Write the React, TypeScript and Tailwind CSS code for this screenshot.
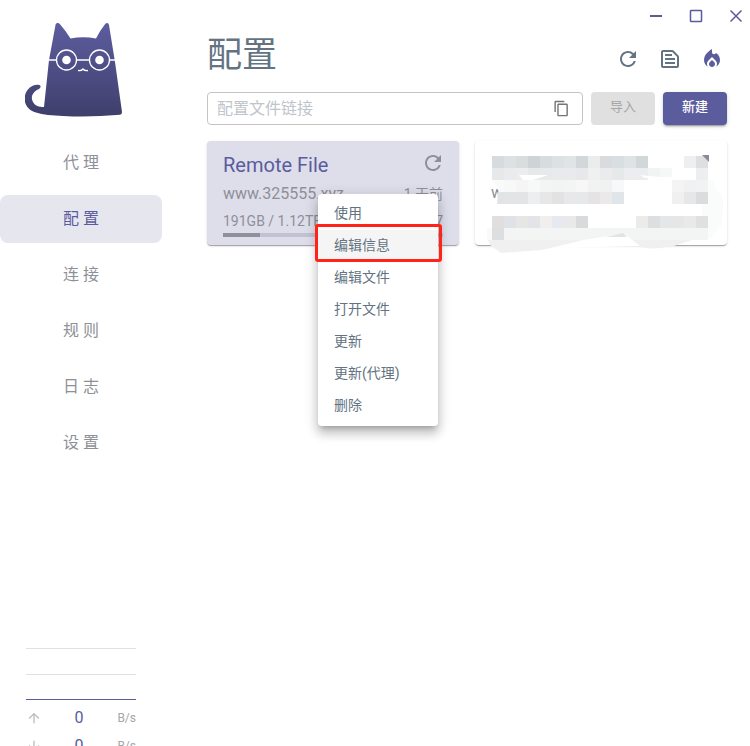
import type { ReactNode } from "react";
import {
  MdArrowDownward,
  MdArrowUpward,
  MdLocalFireDepartment,
  MdOutlineContentCopy,
  MdOutlineTextSnippet,
  MdRefresh,
} from "react-icons/md";

const NAV_ITEMS = ["代 理", "配 置", "连 接", "规 则", "日 志", "设 置"];
const ACTIVE_NAV = "配 置";

const MENU_ITEMS = ["使用", "编辑信息", "编辑文件", "打开文件", "更新", "更新(代理)", "删除"];
const HOVERED_ITEM = "编辑信息";

const CELL = 12;

// one entry per row of blurred cells, "" leaves the cell empty
const MOSAIC: string[][] = [
  ["#d7dbde", "#dde1e4", "#d9dddd", "#ced3d6", "#d7dcdc", "#dce1e3", "#e0e4e5", "#d2d7da", "#ebedec", "#dadbdd", "#d7dfe3", "#dfe3e4", "#d2d7da", "", "", "", "#eeeff1", "#dedfe1"],
  ["#e6e8ea", "#e9ebed", "#ebedee", "#e6e9ea", "#e6eaea", "#e8ebec", "#e8eaeb", "#e6e8ea", "#eff0f0", "#e9ebec", "#e5e9ea", "#ebedee", "#ebedee", "", "", "", "", "#edeef0"],
  ["", "#f8f8f8", "#f5f5f5", "#f7f9f9", "#f3f4f4", "#f2f3f3", "#f3f4f4", "#f7f7f7", "#f2f2f2", "#f0f1f1", "#f6f8fa", "", "", "", "", "#f4f4f4", "#f0f1f3", "#f2f2f3"],
  ["", "#e3e4e6", "#e3e4e6", "#edeef0", "#e8e7e8", "#e3e2e3", "#e8e8ea", "#e7e8ea", "#e6e3e4", "#eaeaeb", "#e0e5e9", "", "", "", "", "#f0f0f1", "#e6e7e9", "#dbdcde"],
  [],
  ["#e0dfde", "#dfe3e7", "#e6e6e5", "#e2e4e8", "#f1efee", "#e6e9f0", "#e9e9ea", "#d9dadb", "", "", "", "", "#edebea", "#dddee0", "#e4e6e8", "#e6e6e6", "#e8e9eb", "#e0e0e0"],
];

function CatLogo() {
  return (
    <svg viewBox="0 0 98 96" className="h-[96px] w-[98px]" aria-label="logo">
      <defs>
        <linearGradient id="fur" x1="0" y1="0" x2="0" y2="1">
          <stop offset="0" stopColor="#5d5da0" />
          <stop offset="1" stopColor="#3f3f6c" />
        </linearGradient>
      </defs>
      <path
        d="M30.500 3C31 .800 33.500.500 35 2.200Q41 9 45.500 16.500Q58 14.200 71 16.500Q75 8.500 80 2.300C81.500.300 83.500.700 84 3L90 40L97 90Q97 92.500 95 92.700Q65 95.500 38 94C27 93.200 18 93 11 90.500C-1 87-3 75 2.500 68C6 63.500 10 62.300 13.500 62.800C17 63.500 15.500 66 13.500 67.200C7 70 5.500 76 8 80C10 84 14 85 19 85L24 38Z"
        fill="url(#fur)"
      />
      <g fill="none" stroke="#fff" strokeWidth="1.300">
        <circle cx="41.500" cy="38" r="10" />
        <circle cx="74.500" cy="38" r="10" />
        <path d="M24 38h7.500M51.500 38h13M84.500 38h6" />
        <path d="M53 48.500q3.500.500 5-1.500q1.500 2 5 1.500" />
      </g>
      <circle cx="41.500" cy="38" r="4.300" fill="#fff" />
      <circle cx="74.500" cy="38" r="4.300" fill="#fff" />
    </svg>
  );
}

function Smudge() {
  return (
    <svg viewBox="0 0 252 112" className="absolute top-0 left-0 h-[112px] w-[252px]" aria-hidden="true">
      <path d="M224 39h15l2 9q8 7 7 15l-1 20l-12 15h-8V63z" fill="#fafbfb" />
      <path d="M12 87h221v12H12z" fill="#f3f4f4" />
      <path d="M12 87h5v12h-5z" fill="#f9fafa" />
      <path d="M13 99h104L66 109L26 112L15 104z" fill="#f0f0f1" />
      <path d="M152 99h65l-18 6q-30 6-45-3z" fill="#f0f0f1" />
      <path d="M76 107L108 99L140 94h11l14 11z" fill="#fff" />
      <path d="M131 96l17-4l4 4z" fill="#e2e3e5" />
      <rect x="17" y="87" width="12" height="12" fill="#dddee0" />
      {MOSAIC.map((row, y) =>
        row.map((color, x) =>
          color ? (
            <rect key={`${x}-${y}`} x={17 + x * CELL} y={15 + y * CELL} width={CELL} height={CELL} fill={color} />
          ) : null,
        ),
      )}
      <path d="M17 39h12v12h-4l-2-4z" fill="#f9fafa" />
      <path d="M23 51h6v12h-7z" fill="#e2e3e5" />
      <path d="M173 27h12v10h-12z" fill="#f1f3f4" />
      <path d="M185 27h12v9h-12z" fill="#f6f8f8" />
      <path d="M44 34h29l-15 5h-10z" fill="#fff" />
      <path d="M165 34l20 2v1h-15z" fill="#fff" />
      <path d="M227 14h7v7z" fill="#8a8b99" />
    </svg>
  );
}

function IconButton({ label, children }: { label: string; children: ReactNode }) {
  return (
    <button type="button" aria-label={label} className="flex size-6 items-center justify-center">
      {children}
    </button>
  );
}

function SpeedRow({ icon }: { icon: ReactNode }) {
  return (
    <div className="flex h-7 items-center text-xs text-[#a5a6a9]">
      <span className="w-4 text-[#bdbdbd]">{icon}</span>
      <span className="flex-1 pl-3 text-center text-base text-[#5b5c9d]">0</span>
      <span className="w-8 text-right">B/s</span>
    </div>
  );
}

function Sidebar() {
  return (
    <aside className="flex w-[200px] shrink-0 flex-col">
      <div className="pt-[22px] pl-[25px]">
        <CatLogo />
      </div>
      <nav className="mt-[21px] flex w-[162px] flex-col gap-2">
        {NAV_ITEMS.map((item) => (
          <a
            key={item}
            href="#"
            className={
              item === ACTIVE_NAV
                ? "flex h-12 items-center justify-center rounded-lg bg-[#e6e6ef] text-base text-[#5b5c9d]"
                : "flex h-12 items-center justify-center rounded-lg text-base text-[#8e9098]"
            }
          >
            {item}
          </a>
        ))}
      </nav>
      <div className="mt-auto ml-[26px] h-[98px] w-[110px] shrink-0">
        <div className="h-[26px] border-t border-[#e0e0e0]" />
        <div className="h-[25px] border-t border-[#e0e0e0]" />
        <div className="border-t border-[#5b5c9d] pt-1">
          <SpeedRow icon={<MdArrowUpward size={16} />} />
          <SpeedRow icon={<MdArrowDownward size={16} />} />
        </div>
      </div>
    </aside>
  );
}

function ContextMenu() {
  return (
    <div
      role="menu"
      className="absolute top-[53px] left-[111px] z-10 w-[120px] rounded bg-white py-1 text-sm text-[#637381] shadow-[0_5px_5px_-3px_rgba(0,0,0,0.2),0_8px_10px_1px_rgba(0,0,0,0.14),0_3px_14px_2px_rgba(0,0,0,0.12)]"
    >
      {MENU_ITEMS.map((item) => (
        <button
          key={item}
          type="button"
          role="menuitem"
          className={
            item === HOVERED_ITEM
              ? "relative flex h-8 w-full items-center bg-[#f5f5f5] px-4 pb-[2px]"
              : "flex h-8 w-full items-center px-4 pb-[2px]"
          }
        >
          {item}
          {item === HOVERED_ITEM && (
            <span className="absolute -top-[6px] -right-1 bottom-0 -left-[3px] rounded-[3px] border-3 border-[#ff2318]" />
          )}
        </button>
      ))}
    </div>
  );
}

const cardShadow =
  "shadow-[0_2px_1px_-1px_rgba(0,0,0,0.2),0_1px_1px_0_rgba(0,0,0,0.14),0_1px_3px_0_rgba(0,0,0,0.12)]";

export default function App() {
  return (
    <div className="flex h-screen overflow-hidden bg-white font-[Roboto,'Noto_Sans_CJK_SC',sans-serif]">
      <Sidebar />
      <main className="min-w-0 flex-1 pr-[23px] pl-[7px]">
        <div className="-mr-[21px] flex h-8 items-center justify-end gap-4 text-[#5b5c9d]">
          <IconButton label="最小化">
            <svg viewBox="0 0 24 24" className="size-6" stroke="currentColor" strokeWidth="2">
              <path d="M6 12h12" />
            </svg>
          </IconButton>
          <IconButton label="最大化">
            <svg viewBox="0 0 24 24" className="size-6" fill="none" stroke="currentColor" strokeWidth="1.500">
              <rect x="6.500" y="6.500" width="11" height="11" rx="0.500" />
            </svg>
          </IconButton>
          <IconButton label="关闭">
            <svg viewBox="0 0 24 24" className="size-6" stroke="currentColor" strokeWidth="1.500">
              <path d="M6.500 6.500l11 11M17.500 6.500l-11 11" />
            </svg>
          </IconButton>
        </div>

        <header className="flex h-[60px] items-center justify-between pb-3 text-[#637381]">
          <h1 className="text-[35px] leading-[48px]">配置</h1>
          <div className="flex items-center gap-[18px] pt-[6px] pr-[3px]">
            <IconButton label="更新所有">
              <MdRefresh size={24} />
            </IconButton>
            <IconButton label="查看配置">
              <MdOutlineTextSnippet size={24} />
            </IconButton>
            <IconButton label="重新激活">
              <MdLocalFireDepartment size={24} className="text-[#5b5c9d]" />
            </IconButton>
          </div>
        </header>

        <div className="flex h-[33px] gap-2">
          <div className="flex min-w-0 flex-1 items-center rounded border border-[#c4c4c4] pr-3 pl-[9px] text-[#757575]">
            <input
              type="text"
              aria-label="配置文件链接"
              placeholder="配置文件链接"
              className="min-w-0 flex-1 text-base outline-none placeholder:text-[#c0c5cb]"
            />
            <button type="button" aria-label="粘贴">
              <MdOutlineContentCopy size={17} />
            </button>
          </div>
          <button type="button" disabled className="w-16 rounded bg-[#e0e0e0] pb-1 text-[13px] text-[#a6a6a6]">
            导入
          </button>
          <button
            type="button"
            className="w-16 rounded bg-[#5b5c9d] pb-1 text-[13px] font-medium text-white shadow-[0_3px_1px_-2px_rgba(0,0,0,0.2),0_2px_2px_0_rgba(0,0,0,0.14),0_1px_5px_0_rgba(0,0,0,0.12)]"
          >
            新建
          </button>
        </div>

        <div className="mt-4 grid grid-cols-2 gap-4">
          <section className={`relative h-[104px] rounded bg-[#dedeeb] px-4 pt-2 text-[#8e8f98] ${cardShadow}`}>
            <div className="flex h-8 items-center justify-between">
              <h2 className="truncate text-xl text-[#5b5c9d]">Remote File</h2>
              <button type="button" aria-label="更新" className="-mr-[2px] mb-1">
                <MdRefresh size={24} />
              </button>
            </div>
            <div className="flex h-[26px] items-center justify-between text-base">
              <span>www.325555.xyz</span>
              <span className="text-sm">1 天前</span>
            </div>
            <div className="flex h-[26px] items-center justify-between pt-[2px] text-sm">
              <span>191GB / 1.12TB</span>
              <span>2024-02-27</span>
            </div>
            <div className="h-1 bg-[#c2c2d2]">
              <div className="h-1 w-[17%] bg-[#8f909d]" />
            </div>
            <ContextMenu />
          </section>
          <section className={`relative h-[104px] rounded bg-white px-4 pt-10 ${cardShadow}`}>
            <span className="text-base text-[#8e8f98]">w</span>
            <Smudge />
          </section>
        </div>
      </main>
    </div>
  );
}
